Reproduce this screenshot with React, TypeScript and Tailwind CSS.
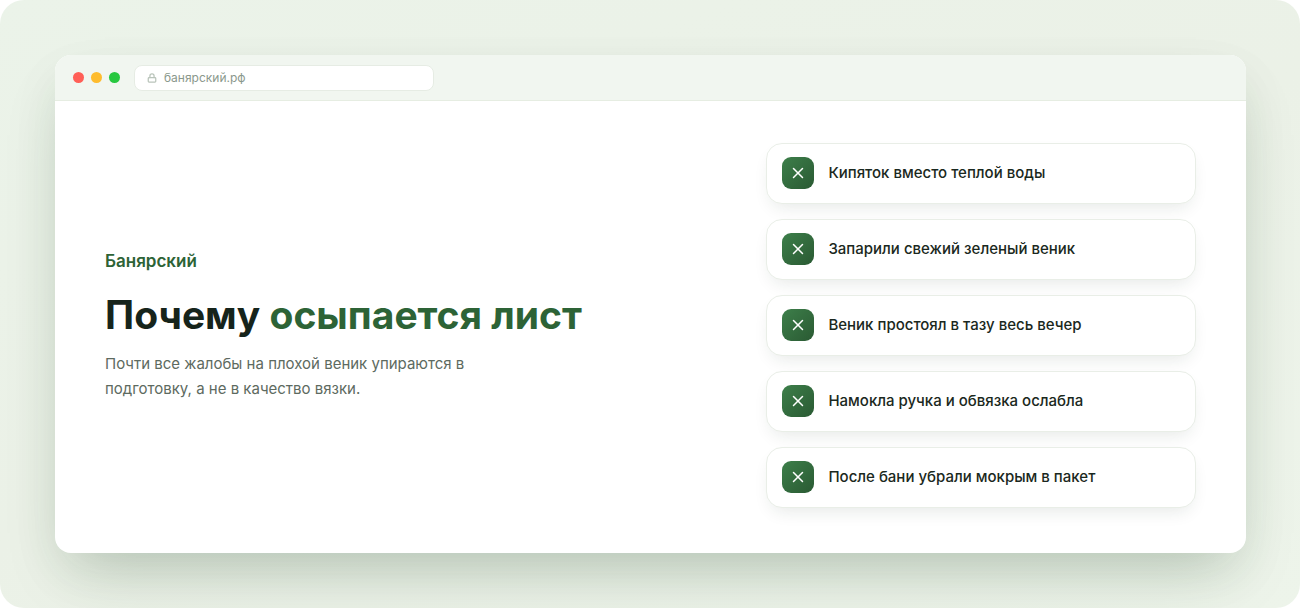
import { Lock, X } from "lucide-react";

const reasons = [
    "Кипяток вместо теплой воды",
    "Запарили свежий зеленый веник",
    "Веник простоял в тазу весь вечер",
    "Намокла ручка и обвязка ослабла",
    "После бани убрали мокрым в пакет",
];

function BrowserBar() {
    return (
        <div className="flex h-[46px] items-center gap-[14px] border-b border-[#e6ede2] bg-[#f1f6f0] px-[18px]">
            <div className="flex gap-[7px]">
                <span className="size-[11px] rounded-full bg-[#ff5f57]" />
                <span className="size-[11px] rounded-full bg-[#febc2e]" />
                <span className="size-[11px] rounded-full bg-[#28c840]" />
            </div>
            <div className="flex h-[26px] w-full max-w-[300px] items-center gap-[7px] rounded-lg border border-[#e6ece4] bg-white px-3 text-xs text-[#8a988c]">
                <Lock size={10} strokeWidth={3} className="text-[#b9c4ba]" />
                <span>банярский.рф</span>
            </div>
        </div>
    );
}

function ReasonCard({ text }: { text: string }) {
    return (
        <li className="flex min-h-[61px] items-center gap-[14px] rounded-2xl border border-[#e9eee7] bg-white px-[15px] shadow-[0_8px_18px_-6px_rgba(26,46,32,0.12)]">
            <span className="flex size-8 shrink-0 items-center justify-center rounded-[9px] bg-linear-135 from-[#3d7f4a] to-[#2a5a33] text-white">
                <X size={18} strokeWidth={2} />
            </span>
            <span className="text-[15px] font-medium text-[#1a2820]">{text}</span>
        </li>
    );
}

function App() {
    return (
        <div className="bg-white font-['Inter',sans-serif]">
            <main className="flex min-h-screen flex-col rounded-[24px] bg-linear-160 from-[#ebf3e9] via-[#ebf1e7] to-[#edf4ea] p-[55px] pr-[54px]">
                <div className="flex flex-1 flex-col overflow-hidden rounded-2xl bg-white shadow-[0_30px_60px_-20px_rgba(31,66,41,0.25),0_20px_50px_rgba(31,66,41,0.06)]">
                    <BrowserBar />
                    <div className="grid flex-1 grid-cols-[1.4fr_1fr] items-center gap-[60px] px-[50px] pb-1">
                        <section>
                            <p className="text-[17px] leading-6 font-semibold text-[#2d6336]">Банярский</p>
                            <h1 className="mt-[18px] text-[39px] leading-[48px] font-bold text-[#16241b]">
                                Почему <span className="text-[#2d6336]">осыпается лист</span>
                            </h1>
                            <p className="mt-3 max-w-[400px] text-[15px] leading-[25px] text-[#5d6a60]">
                                Почти все жалобы на плохой веник упираются в подготовку, а не в качество вязки.
                            </p>
                        </section>
                        <ul className="flex flex-col gap-[15px]">
                            {reasons.map((text) => (
                                <ReasonCard key={text} text={text} />
                            ))}
                        </ul>
                    </div>
                </div>
            </main>
        </div>
    );
}

export default App;
